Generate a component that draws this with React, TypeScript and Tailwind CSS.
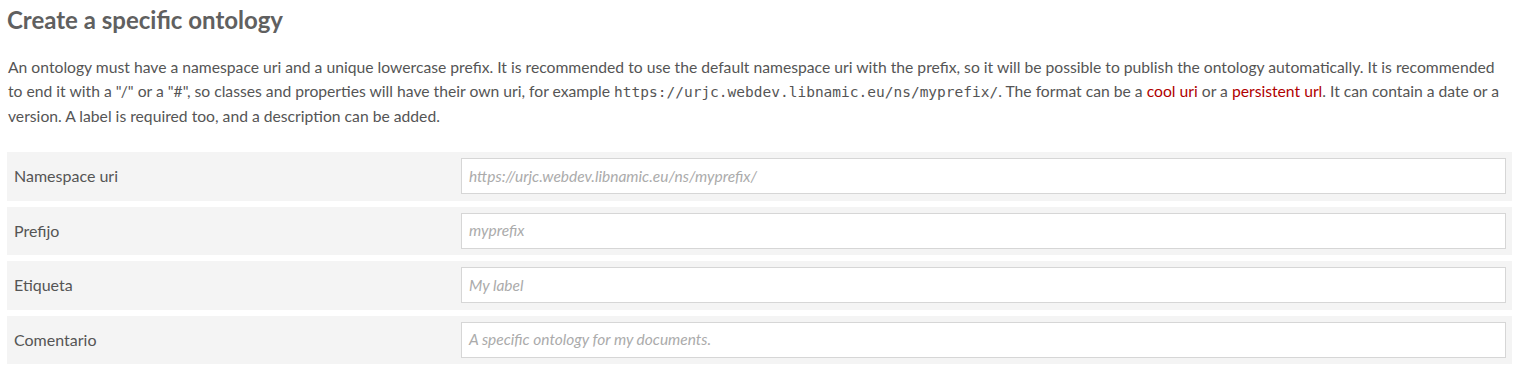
import React from "react";

const rows = [
  { label: "Namespace uri", ph: "https://urjc.webdev.libnamic.eu/ns/myprefix/" },
  { label: "Prefijo", ph: "myprefix" },
  { label: "Etiqueta", ph: "My label" },
  { label: "Comentario", ph: "A specific ontology for my documents." },
];

export default function App() {
  return (
    <div className="bg-white px-[7px] pt-[5px] text-[#555] [font-family:Lato,'Open_Sans',sans-serif]">
      <h1 className="m-0 text-[24px] leading-[30px] font-bold text-[#606060]">Create a specific ontology</h1>
      <p className="mt-[20px] pl-[1px] pr-[14px] text-[15.7px] leading-[24px] text-[#555]">
        An ontology must have a namespace uri and a unique lowercase prefix. It is recommended to use the default namespace uri with the prefix, so it will be possible to publish the ontology automatically. It is recommended to end it with a "/" or a "#", so classes and properties will have their own uri, for example{" "}
        <code className="text-[14.5px] [font-family:'DejaVu_Sans_Mono',monospace]">https://urjc.webdev.libnamic.eu/ns/myprefix/</code>. The format can be a{" "}
        <a className="text-[#b00000]">cool uri</a> or a <a className="text-[#b00000]">persistent url</a>. It can contain a date or a version. A label is required too, and a description can be added.
      </p>
      <div className="mt-[24px] flex flex-col gap-[6px] pr-[8px]">
        {rows.map((r) => (
          <div key={r.label} className="flex h-[48.5px] items-center bg-[#f4f4f4] py-[6px] pr-[6px]">
            <div className="w-[454px] shrink-0 pl-[7px] text-[16px] text-[#555]">{r.label}</div>
            <div className="flex h-[36px] flex-1 items-center border border-[#d6d6d6] bg-white px-[7px]">
              <span className="text-[15.5px] italic text-[#ababab]">{r.ph}</span>
            </div>
          </div>
        ))}
      </div>
    </div>
  );
}
